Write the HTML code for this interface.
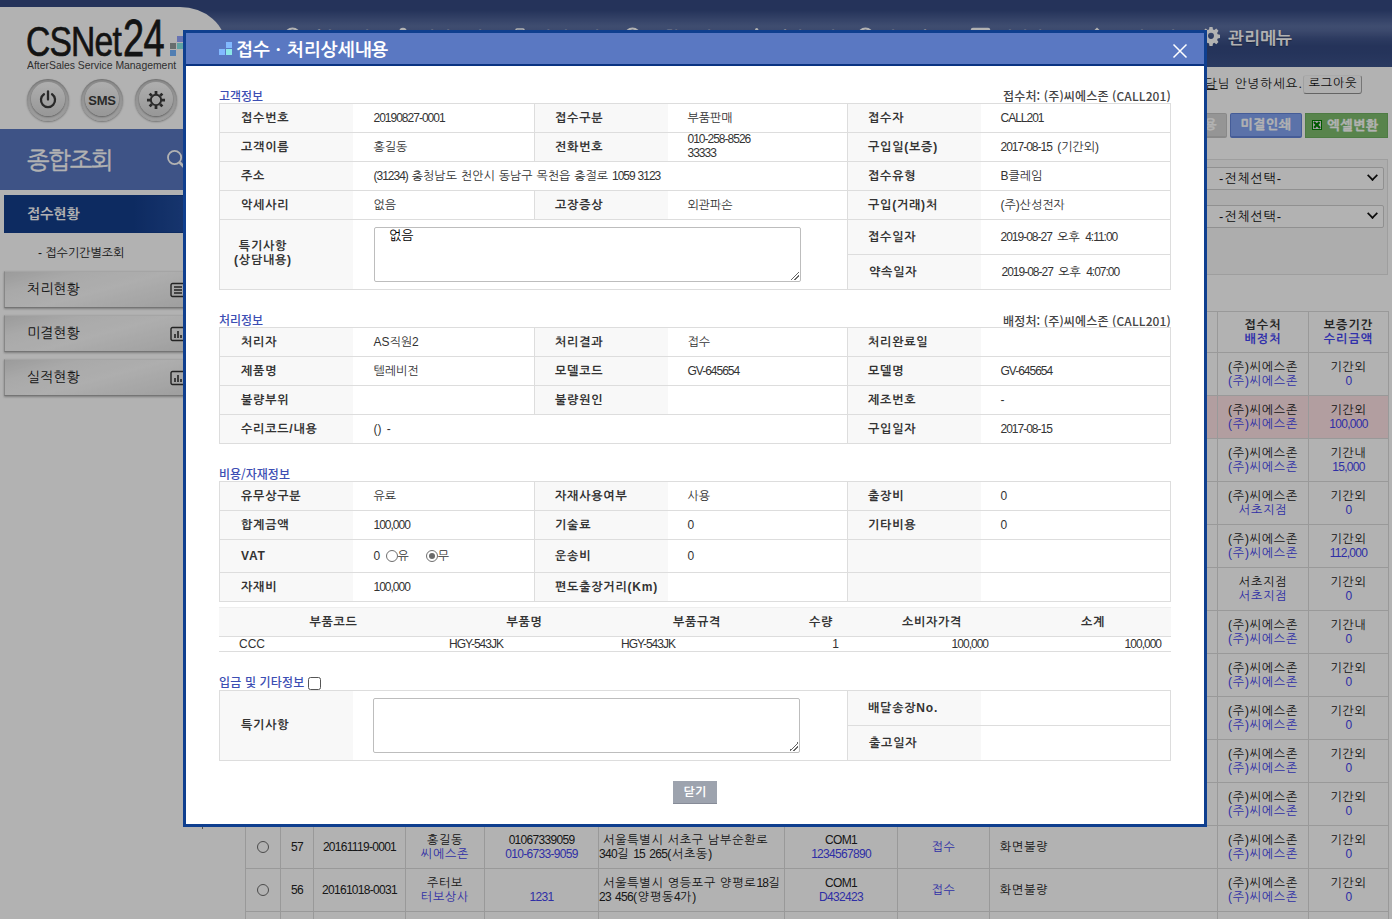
<!DOCTYPE html>
<html lang="ko">
<head>
<meta charset="utf-8">
<title>CSNet24 - 접수·처리상세내용</title>
<style>
*{box-sizing:border-box;}
html,body{margin:0;padding:0;}
body{width:1393px;height:919px;overflow:hidden;background:#fff;position:relative;
  font-family:"Liberation Sans","NanumGothic","Noto Sans CJK KR",sans-serif;font-size:12px;color:#222;}
.abs{position:absolute;}
/* ---------- underlying page ---------- */
#page{position:absolute;left:0;top:0;width:1392px;height:919px;overflow:hidden;background:#fff;}
#hdr{position:absolute;left:0;top:0;width:1392px;height:67px;
  background:linear-gradient(to bottom,#354a81 0%,#354a81 15%,#4a5e93 28%,#5b6fa1 39%,#56699c 46%,#40548a 58%,#354a81 69%,#364b83 80%,#3d538b 100%);}
#logo{position:absolute;left:0;top:7px;width:226px;height:122px;background:#fff;border-top-right-radius:46px 40px;}
#band{position:absolute;left:0;top:129px;width:240px;height:61px;background:#5977c1;}
#side{position:absolute;left:0;top:190px;width:240px;height:729px;background:#fff;}
.mbtn{position:absolute;left:4px;width:236px;height:37px;border:1px solid #c2c2c2;border-top-color:#ededed;border-bottom-color:#a8a8a8;
  background:linear-gradient(165deg,#dedede 0%,#f3f3f3 22%,#f9f9f9 45%,#ececec 70%,#dadada 100%);
  box-shadow:0 1px 2px rgba(0,0,0,.3);font-size:14px;color:#222;line-height:35px;padding-left:22px;}
.mbtn.on{background:linear-gradient(to right,#143e8c 0%,#143e8c 55%,#2f5bb0 100%);border-color:#143e8c;color:#fff;font-weight:bold;box-shadow:none;}
.rb{position:absolute;top:79px;width:42px;height:42px;border-radius:50%;background:linear-gradient(to bottom,#cfcfcf,#e4e4e4);box-shadow:0 1px 2px rgba(0,0,0,.35),inset 0 1px 2px rgba(0,0,0,.25);display:flex;align-items:center;justify-content:center;}
.rb::before{content:"";position:absolute;left:4px;top:3px;width:34px;height:34px;border-radius:50%;background:linear-gradient(to bottom,#fafafa,#d9d9d9);box-shadow:0 1px 2px rgba(0,0,0,.4);}
.rb>*{position:relative;}
.mi{position:absolute;left:165px;top:10px;}
#gnb .gi{position:absolute;top:27px;font-size:17px;line-height:24px;color:#fff;white-space:nowrap;letter-spacing:0;font-weight:bold;text-shadow:0 1px 1px rgba(0,0,0,.35);}
.btn{position:absolute;top:113px;height:25px;border:1px solid;border-bottom-width:2px;border-radius:2px;color:#fff;font-weight:bold;font-size:13px;line-height:21px;text-align:center;white-space:nowrap;letter-spacing:.6px;-webkit-text-stroke:.35px #fff;}
.sel{position:absolute;left:1100px;width:284px;height:23px;border:1px solid #cfcfcf;border-radius:2px;letter-spacing:.9px;background:#fff;font-size:13px;line-height:21px;padding-left:118px;color:#111;white-space:nowrap;}
.sel::after{content:"";position:absolute;right:6px;top:3px;width:7px;height:7px;border-right:2.4px solid #111;border-bottom:2.4px solid #111;transform:rotate(45deg) scale(.85);}
#lst{position:absolute;left:245px;top:311px;width:1143px;border-collapse:collapse;table-layout:fixed;font-size:12px;color:#222;}
#lst th,#lst td{border:1px solid #dcdcdc;padding:0;text-align:center;vertical-align:middle;line-height:14px;overflow:hidden;}
#lst tr{height:43px;}
#lst tr.hd{height:41px;}
#lst th{font-weight:bold;color:#333;background:#fff;line-height:14px;letter-spacing:1.1px;}
#lst th i{font-style:normal;color:#4646f5;}
#lst td{letter-spacing:.8px;}
#lst td .n{letter-spacing:-.7px;}
#lst td a{color:#4444ee;}
#lst td.l{text-align:left;}
#lst td.p{padding-left:10px;}
#lst tr.pk td{background:#ffe3e6;}
.rd{display:inline-block;width:12px;height:12px;border:1px solid #6c6c6c;border-radius:50%;background:#fff;vertical-align:middle;position:relative;top:-1px;}
/* overlay */
#ov{position:absolute;left:0;top:0;width:1392px;height:919px;background:rgba(0,0,0,.3);}
/* ---------- modal ---------- */
#modal{position:absolute;left:183px;top:30px;width:1024px;height:797px;border:3px solid #0f3f8f;background:#fff;}
#mh{position:absolute;left:0;top:0;width:1018px;height:33px;background:#5a78c2;border-bottom:2px solid #0a3382;}
#mh .ttl{position:absolute;left:50px;top:5px;font-size:18px;font-weight:bold;color:#fff;line-height:24px;white-space:nowrap;}
.sec{position:absolute;left:33px;font-size:12px;color:#3c4eb3;line-height:14px;white-space:nowrap;font-family:"Noto Sans CJK KR","Liberation Sans",sans-serif;font-weight:500;}
.secr{position:absolute;right:33px;font-size:12px;color:#444;line-height:14px;white-space:nowrap;font-family:"Noto Sans CJK KR","Liberation Sans",sans-serif;font-weight:500;letter-spacing:.14px;}
table.ft{position:absolute;left:33px;width:951px;border-collapse:collapse;table-layout:fixed;border:1px solid #ddd;}
table.ft th{background:#f8f8f8;text-align:left;font-weight:bold;color:#333;padding:0 0 0 20px;border-top:1px solid #ddd;border-bottom:1px solid #ddd;font-size:12px;letter-spacing:.8px;}
table.ft th:first-child{padding-left:21px;}
table.ft th:first-child + td{padding-left:21px;}
table.ft td{padding:0 0 0 20px;color:#333;border-top:1px solid #ddd;border-bottom:1px solid #ddd;font-size:12px;letter-spacing:0;word-spacing:2px;}
table.ft th.bl{border-left:1px solid #ddd;}
.icq{position:absolute;width:6px;height:6px;}
table.ft td .n, #pt .n{letter-spacing:-1px;}
.ta{width:427px;border:1px solid #bdbdbd;border-radius:2px;background:#fff;font-size:13px;line-height:15px;padding:0 0 0 9px;color:#000;position:relative;letter-spacing:0;}
.ta::after{content:"";position:absolute;right:1px;bottom:1px;width:9px;height:9px;background:linear-gradient(135deg,transparent 0 50%,#666 50% 58%,transparent 58% 70%,#666 70% 78%,transparent 78% 100%);}
.rdo{display:inline-block;width:12px;height:12px;border:1px solid #6e6e6e;border-radius:50%;vertical-align:-2.5px;margin-left:1px;background:#fff;position:relative;}
.rdo.on::after{content:"";position:absolute;left:2px;top:2px;width:6px;height:6px;border-radius:50%;background:#6a6a6a;}
#pt{position:absolute;left:33px;top:574px;width:952px;border-collapse:collapse;table-layout:fixed;font-size:12px;}
#pt th{background:#f8f8f8;height:29px;font-weight:bold;color:#333;text-align:center;border-top:1px solid #eee;border-bottom:1px solid #ddd;padding:0;letter-spacing:.75px;}
#pt td{height:15px;line-height:14px;text-align:center;color:#333;border-bottom:1px solid #ddd;padding:0;}
.cb{display:inline-block;width:13px;height:13px;border:1px solid #555;border-radius:2.5px;background:#fff;vertical-align:-3px;margin-left:4px;}
</style>
</head>
<body>
<div id="page">
  <div id="hdr"></div>
  <div id="logo"></div>
  <div id="band"></div>
  <div id="side"></div>
  <div id="logotxt" class="abs" style="left:26px;top:13px;width:160px;height:50px;white-space:nowrap;color:#1c1c1c;">
    <span class="abs" style="left:0;top:8px;font-size:42px;line-height:42px;transform:scaleX(.80);transform-origin:0 0;letter-spacing:-1px;-webkit-text-stroke:.7px #1c1c1c;">CSNet</span>
    <span class="abs" style="left:97px;top:-1px;font-size:52px;line-height:52px;transform:scaleX(.73);transform-origin:0 0;letter-spacing:-1px;-webkit-text-stroke:.8px #1c1c1c;">24</span>
  </div>
  <div class="abs" style="left:170px;top:43px;width:6px;height:6px;background:#949c9c;"></div>
  <div class="abs" style="left:177px;top:36px;width:7px;height:6px;background:#94a5ff;"></div>
  <div class="abs" style="left:177px;top:43px;width:7px;height:6px;background:#88e9e9;"></div>
  <div class="abs" style="left:170px;top:50px;width:6px;height:6px;background:#75b5ff;"></div>
  <div class="abs" id="sub" style="left:27px;top:59px;font-size:11px;line-height:13px;color:#444;white-space:nowrap;transform:scaleX(.945);transform-origin:0 0;">AfterSales Service Management</div>
  <div class="rb" style="left:27px;"><svg width="22" height="22" viewBox="0 0 20 20"><path d="M6.300 4.800A6.400 6.400 0 1 0 13.700 4.800" fill="none" stroke="#3c3c3c" stroke-width="2.100" stroke-linecap="round"/><path d="M10 2.200V9.600" stroke="#3c3c3c" stroke-width="2.100" stroke-linecap="round"/></svg></div>
  <div class="rb" style="left:81px;"><b style="font-size:13px;color:#3c3c3c;letter-spacing:-.2px;">SMS</b></div>
  <div class="rb" style="left:135px;"><svg width="22" height="22" viewBox="0 0 20 20"><circle cx="10" cy="10" r="4.700" fill="none" stroke="#3c3c3c" stroke-width="1.800"/><g stroke="#3c3c3c" stroke-width="2.500"><path d="M10 1.800V4.600M10 15.400V18.200M1.800 10H4.600M15.400 10H18.200M4.200 4.200L6.200 6.200M13.800 13.800L15.800 15.800M15.800 4.200L13.800 6.200M6.200 13.800L4.200 15.800"/></g></svg></div>
  <div class="abs" style="left:27px;top:146px;font-size:24px;line-height:30px;color:#fff;white-space:nowrap;letter-spacing:-1.2px;-webkit-text-stroke:.35px #fff;">종합조회</div>
  <svg class="abs" style="left:166px;top:149px;" width="22" height="22" viewBox="0 0 22 22"><circle cx="8.600" cy="8.500" r="6.600" fill="none" stroke="#fff" stroke-width="1.800"/><path d="M13.600 13.400L19.500 19.500" stroke="#fff" stroke-width="2.800"/></svg>
  <div class="mbtn on" style="top:195px;height:38px;line-height:37px;">접수현황</div>
  <div class="abs" style="left:38px;top:246px;font-size:12px;line-height:14px;color:#222;white-space:nowrap;">- 접수기간별조회</div>
  <div class="mbtn" style="top:271px;">처리현황<svg class="mi" width="16" height="16" viewBox="0 0 16 16"><rect x="1" y="1.5" width="14" height="13" rx="1.5" fill="none" stroke="#333" stroke-width="1.4"/><path d="M4 5H12M4 8H12M4 11H12" stroke="#333" stroke-width="1.3"/></svg></div>
  <div class="mbtn" style="top:315px;">미결현황<svg class="mi" width="16" height="16" viewBox="0 0 16 16"><rect x="1" y="1.5" width="14" height="13" rx="1.5" fill="none" stroke="#333" stroke-width="1.4"/><path d="M5 12V8M8 12V5M11 12V9" stroke="#333" stroke-width="1.6"/></svg></div>
  <div class="mbtn" style="top:359px;">실적현황<svg class="mi" width="16" height="16" viewBox="0 0 16 16"><rect x="1" y="1.5" width="14" height="13" rx="1.5" fill="none" stroke="#333" stroke-width="1.4"/><path d="M5 12V8M8 12V5M11 12V9" stroke="#333" stroke-width="1.6"/></svg></div>
  <!-- top menu (mostly hidden behind the dialog) -->
  <div id="gnb">
    <svg class="abs" style="left:284px;top:27px;" width="17" height="18" viewBox="0 0 17 18"><circle cx="8.5" cy="8.5" r="7" fill="none" stroke="#fff" stroke-width="2"/><path d="M8.500 4.500V9H12" fill="none" stroke="#fff" stroke-width="1.600"/></svg><span class="gi" style="left:306px;">접수관리</span>
    <svg class="abs" style="left:395px;top:27px;" width="16" height="18" viewBox="0 0 16 18"><circle cx="8" cy="4.500" r="3.800" fill="#fff"/><path d="M1 17c0-5 3-7 7-7s7 2 7 7z" fill="#fff"/></svg><span class="gi" style="left:419px;">처리관리</span>
    <svg class="abs" style="left:515px;top:28px;" width="14" height="17" viewBox="0 0 14 17"><rect x="1" y="1" width="8" height="3" rx="1" fill="none" stroke="#fff" stroke-width="1.600"/><rect x="1" y="4" width="12" height="12" rx="1" fill="#fff"/></svg><span class="gi" style="left:536px;">자재관리</span>
    <svg class="abs" style="left:624px;top:27px;" width="17" height="18" viewBox="0 0 17 18"><circle cx="8.5" cy="8.5" r="7" fill="none" stroke="#fff" stroke-width="2"/><path d="M8.500 4.500V9H12" fill="none" stroke="#fff" stroke-width="1.600"/></svg><span class="gi" style="left:648px;">종합조회</span>
    <svg class="abs" style="left:750px;top:27px;" width="16" height="18" viewBox="0 0 16 18"><circle cx="6.700" cy="2.500" r="1.600" fill="#fff"/><path d="M1 17V9h3v8zM5.500 17V6h3v11zM10 17v-6h3v6z" fill="#fff"/></svg><span class="gi" style="left:772px;">정산관리</span>
    <svg class="abs" style="left:857px;top:27px;" width="17" height="18" viewBox="0 0 17 18"><circle cx="8.5" cy="8.5" r="7" fill="none" stroke="#fff" stroke-width="2"/><path d="M8.500 4.500V9H12" fill="none" stroke="#fff" stroke-width="1.600"/></svg><span class="gi" style="left:880px;">기준정보</span>
    <svg class="abs" style="left:970px;top:27px;" width="21" height="17" viewBox="0 0 21 17"><rect x=".8" y=".8" width="19.400" height="13" rx="2" fill="#fff"/><path d="M5 14l-1 3h4l1-3z" fill="#fff"/></svg><span class="gi" style="left:996px;">게시판</span>
    <svg class="abs" style="left:1089px;top:27px;" width="16" height="18" viewBox="0 0 16 18"><path d="M8 .5l3 3c2 1.500 2 5 2.500 8l1.500 2.500H1L2.500 11.500c.5-3 .5-6.500 2.500-8z" fill="#fff"/><circle cx="8" cy="16" r="1.800" fill="#fff"/></svg><span class="gi" style="left:1112px;">고객관리</span>
    <svg class="abs" style="left:1201px;top:26px;" width="20" height="21" viewBox="0 0 20 20" preserveAspectRatio="none"><path fill="#fff" fill-rule="evenodd" d="M8.3 0.6h3.4l.5 2.6 1.5.6 2.2-1.5 2.4 2.4-1.5 2.2.6 1.5 2.6.5v3.4l-2.6.5-.6 1.5 1.5 2.2-2.4 2.4-2.2-1.5-1.5.6-.5 2.6H8.3l-.5-2.6-1.5-.6-2.2 1.5-2.4-2.4 1.5-2.2-.6-1.5L0 12.3V8.9l2.6-.5.6-1.5L1.7 4.700l2.4-2.4 2.2 1.500 1.500-.6zM10 6.700a3.300 3.300 0 1 0 0 6.600 3.300 3.300 0 0 0 0-6.600z" transform="translate(1 .4) scale(.9)"/></svg>
    <span class="gi" style="left:1228px;">관리메뉴</span>
  </div>
  <!-- user line -->
  <div class="abs" style="left:1080px;top:77px;width:223px;text-align:right;font-size:12.5px;line-height:15px;color:#222;white-space:nowrap;letter-spacing:1px;"><u>씨에스존 상담</u>님 안녕하세요.</div>
  <div class="abs" style="left:1303px;top:75px;width:59px;height:19px;border:1px solid;border-color:#f4f4f4 #a9a9a9 #909090 #e6e6e6;border-radius:3px;background:#fdfdfd;font-size:12px;line-height:15px;text-align:center;color:#111;letter-spacing:.9px;padding-left:1px;">로그아웃</div>
  <!-- action buttons -->
  <div class="btn" style="left:1156px;width:71px;background:#d6d6d6;border-color:#c4c4c4;color:#fff;">일괄적용</div>
  <div class="btn" style="left:1230px;width:72px;background:#83a4f2;border-color:#6485d8;">미결인쇄</div>
  <div class="btn" style="left:1305px;width:83px;background:#7ebe6e;border-color:#70b062;border-radius:0;border-width:1px;padding-left:13px;line-height:23px;-webkit-text-stroke:.35px #fff;"><svg class="abs" style="left:6px;top:6px;" width="10" height="10" viewBox="0 0 10 10"><rect x=".5" y=".5" width="9" height="9" fill="#f3e6f3" stroke="#008200"/><path d="M2 2L8 8M7.500 2L5.500 4.200M2.200 7.800L4.200 5.600" stroke="#008200" stroke-width="2.200"/></svg>엑셀변환</div>
  <!-- filter panel -->
  <div class="abs" style="left:246px;top:159px;width:1142px;height:116px;border:1px solid #e2e2e2;background:#f8f8f8;"></div>
  <div class="sel" style="top:167px;">-전체선택-</div>
  <div class="sel" style="top:205px;">-전체선택-</div>
  <table id="lst">
    <colgroup><col style="width:35px"><col style="width:33px"><col style="width:92px"><col style="width:79px"><col style="width:114px"><col style="width:186px"><col style="width:113px"><col style="width:92px"><col style="width:228px"><col style="width:91px"><col style="width:80px"></colgroup>
    <tr class="hd"><th>선택</th><th>No</th><th>접수번호</th><th>고객명<br><i>거래처</i></th><th>전화번호<br><i>휴대폰</i></th><th>주소</th><th>모델명<br><i>제조번호</i></th><th>처리결과</th><th>고장증상</th><th>접수처<br><i>배정처</i></th><th>보증기간<br><i>수리금액</i></th></tr>
    <tr><td><span class="rd"></span></td><td><span class="n">69</span></td><td><span class="n">20190827-0001</span></td><td>홍길동<br><a>&nbsp;</a></td><td><span class="n">010-258-8526</span><br><a><span class="n">33333</span></a></td><td class="l">&nbsp;충청남도 천안시 동남구 목천읍 충절로 <span class="n">1059</span> <span class="n">3123</span></td><td><span class="n">GV-645654</span><br><a>-</a></td><td><a>접수</a></td><td class="l p">외관파손</td><td>(주)씨에스존<br><a>(주)씨에스존</a></td><td>기간외<br><a><span class="n">0</span></a></td></tr>
    <tr class="pk"><td><span class="rd"></span></td><td><span class="n">68</span></td><td><span class="n">20190826-0002</span></td><td>홍길동<br><a>&nbsp;</a></td><td><span class="n">010-258-8526</span><br><a><span class="n">33333</span></a></td><td class="l">&nbsp;충청남도 천안시 동남구 목천읍 충절로 <span class="n">1059</span> <span class="n">3123</span></td><td><span class="n">GV-645654</span><br><a>-</a></td><td><a>접수</a></td><td class="l p">외관파손</td><td>(주)씨에스존<br><a>(주)씨에스존</a></td><td>기간외<br><a><span class="n">100,000</span></a></td></tr>
    <tr><td><span class="rd"></span></td><td><span class="n">67</span></td><td><span class="n">20190826-0001</span></td><td>김영수<br><a>&nbsp;</a></td><td><span class="n">010-555-1234</span><br><a>&nbsp;</a></td><td class="l">&nbsp;서울특별시 강남구 테헤란로 <span class="n">152</span> <span class="n">1203</span></td><td><span class="n">GV-645654</span><br><a><span class="n">A12345</span></a></td><td><a>완료</a></td><td class="l p">전원불량</td><td>(주)씨에스존<br><a>(주)씨에스존</a></td><td>기간내<br><a><span class="n">15,000</span></a></td></tr>
    <tr><td><span class="rd"></span></td><td><span class="n">66</span></td><td><span class="n">20190701-0003</span></td><td>이민호<br><a>&nbsp;</a></td><td><span class="n">010-222-3333</span><br><a>&nbsp;</a></td><td class="l">&nbsp;서울특별시 서초구 서초대로 <span class="n">77</span> <span class="n">301</span></td><td><span class="n">COM1</span><br><a><span class="n">S998877</span></a></td><td><a>접수</a></td><td class="l p">소음발생</td><td>(주)씨에스존<br><a>서초지점</a></td><td>기간외<br><a><span class="n">0</span></a></td></tr>
    <tr><td><span class="rd"></span></td><td><span class="n">65</span></td><td><span class="n">20190701-0002</span></td><td>박지성<br><a>&nbsp;</a></td><td><span class="n">010-777-8888</span><br><a>&nbsp;</a></td><td class="l">&nbsp;경기도 성남시 분당구 판교로 <span class="n">235</span> <span class="n">5</span>층</td><td><span class="n">COM1</span><br><a><span class="n">P112233</span></a></td><td><a>완료</a></td><td class="l p">화면불량</td><td>(주)씨에스존<br><a>(주)씨에스존</a></td><td>기간외<br><a><span class="n">112,000</span></a></td></tr>
    <tr><td><span class="rd"></span></td><td><span class="n">64</span></td><td><span class="n">20190701-0001</span></td><td>최수진<br><a>&nbsp;</a></td><td><span class="n">010-444-5555</span><br><a>&nbsp;</a></td><td class="l">&nbsp;서울특별시 서초구 반포대로 <span class="n">58</span> <span class="n">1102</span></td><td><span class="n">COM1</span><br><a><span class="n">K445566</span></a></td><td><a>접수</a></td><td class="l p">전원불량</td><td>서초지점<br><a>서초지점</a></td><td>기간외<br><a><span class="n">0</span></a></td></tr>
    <tr><td><span class="rd"></span></td><td><span class="n">63</span></td><td><span class="n">20190520-0001</span></td><td>정우성<br><a>&nbsp;</a></td><td><span class="n">010-999-0000</span><br><a>&nbsp;</a></td><td class="l">&nbsp;인천광역시 연수구 송도과학로 <span class="n">32</span> <span class="n">707</span></td><td><span class="n">GV-645654</span><br><a>-</a></td><td><a>접수</a></td><td class="l p">외관파손</td><td>(주)씨에스존<br><a>(주)씨에스존</a></td><td>기간내<br><a><span class="n">0</span></a></td></tr>
    <tr><td><span class="rd"></span></td><td><span class="n">62</span></td><td><span class="n">20181203-0002</span></td><td>한지민<br><a>&nbsp;</a></td><td><span class="n">010-123-4567</span><br><a>&nbsp;</a></td><td class="l">&nbsp;서울특별시 마포구 월드컵북로 <span class="n">396</span> <span class="n">12</span>층</td><td><span class="n">COM1</span><br><a><span class="n">M778899</span></a></td><td><a>접수</a></td><td class="l p">화면불량</td><td>(주)씨에스존<br><a>(주)씨에스존</a></td><td>기간외<br><a><span class="n">0</span></a></td></tr>
    <tr><td><span class="rd"></span></td><td><span class="n">61</span></td><td><span class="n">20181203-0001</span></td><td>강동원<br><a>&nbsp;</a></td><td><span class="n">010-321-7654</span><br><a>&nbsp;</a></td><td class="l">&nbsp;부산광역시 해운대구 센텀중앙로 <span class="n">79</span> <span class="n">2101</span></td><td><span class="n">COM1</span><br><a><span class="n">B334455</span></a></td><td><a>접수</a></td><td class="l p">화면불량</td><td>(주)씨에스존<br><a>(주)씨에스존</a></td><td>기간외<br><a><span class="n">0</span></a></td></tr>
    <tr><td><span class="rd"></span></td><td><span class="n">59</span></td><td><span class="n">20170315-0002</span></td><td>송혜교<br><a>&nbsp;</a></td><td><span class="n">010-888-1111</span><br><a>&nbsp;</a></td><td class="l">&nbsp;대구광역시 수성구 동대구로 <span class="n">330</span> <span class="n">4</span>층</td><td><span class="n">COM1</span><br><a><span class="n">D667788</span></a></td><td><a>접수</a></td><td class="l p">화면불량</td><td>(주)씨에스존<br><a>(주)씨에스존</a></td><td>기간외<br><a><span class="n">0</span></a></td></tr>
    <tr><td><span class="rd"></span></td><td><span class="n">58</span></td><td><span class="n">20170315-0001</span></td><td>홍길동<br><a>씨에스존</a></td><td><span class="n">01067339059</span><br><a><span class="n">010-6733-9059</span></a></td><td class="l">&nbsp;서울특별시 서초구 남부순환로 <span class="n">340</span>길 <span class="n">15</span> <span class="n">265</span>(서초동)</td><td><span class="n">COM1</span><br><a><span class="n">1234567890</span></a></td><td><a>접수</a></td><td class="l p">화면불량</td><td>(주)씨에스존<br><a>(주)씨에스존</a></td><td>기간외<br><a><span class="n">0</span></a></td></tr>
    <tr><td><span class="rd"></span></td><td><span class="n">57</span></td><td><span class="n">20161119-0001</span></td><td>홍길동<br><a>씨에스존</a></td><td><span class="n">01067339059</span><br><a><span class="n">010-6733-9059</span></a></td><td class="l">&nbsp;서울특별시 서초구 남부순환로 <span class="n">340</span>길 <span class="n">15</span> <span class="n">265</span>(서초동)</td><td><span class="n">COM1</span><br><a><span class="n">1234567890</span></a></td><td><a>접수</a></td><td class="l p">화면불량</td><td>(주)씨에스존<br><a>(주)씨에스존</a></td><td>기간외<br><a><span class="n">0</span></a></td></tr>
    <tr><td><span class="rd"></span></td><td><span class="n">56</span></td><td><span class="n">20161018-0031</span></td><td>주터보<br><a>터보상사</a></td><td>&nbsp;<br><a><span class="n">1231</span></a></td><td class="l">&nbsp;서울특별시 영등포구 양평로<span class="n">18</span>길 <span class="n">23</span> <span class="n">456</span>(양평동<span class="n">4</span>가)</td><td><span class="n">COM1</span><br><a><span class="n">D432423</span></a></td><td><a>접수</a></td><td class="l p">화면불량</td><td>(주)씨에스존<br><a>(주)씨에스존</a></td><td>기간외<br><a><span class="n">0</span></a></td></tr>
    <tr><td><span class="rd"></span></td><td><span class="n">55</span></td><td><span class="n">20161018-0030</span></td><td>주터보<br><a>터보상사</a></td><td>&nbsp;<br><a><span class="n">1231</span></a></td><td class="l">&nbsp;서울특별시 영등포구 양평로<span class="n">18</span>길 <span class="n">23</span> <span class="n">456</span>(양평동<span class="n">4</span>가)</td><td><span class="n">COM1</span><br><a><span class="n">D432423</span></a></td><td><a>접수</a></td><td class="l p">화면불량</td><td>(주)씨에스존<br><a>(주)씨에스존</a></td><td>기간외<br><a><span class="n">0</span></a></td></tr>
  </table>
  <div class="abs" style="left:202px;top:827px;width:1px;height:2px;background:#777;"></div>
  <!--PAGE-->
</div>
<div id="ov"></div>
<div id="modal">
  <div id="mh"><div class="ttl">접수ㆍ처리상세내용</div></div>
  <div class="icq" style="left:33px;top:16px;background:#82b9ff;"></div>
  <div class="icq" style="left:40px;top:9px;background:#82b9ff;"></div>
  <div class="icq" style="left:40px;top:16px;background:#8ce8e8;"></div>
  <svg class="abs" style="left:986px;top:10px;" width="16" height="16" viewBox="0 0 16 16"><path d="M1.5 1.5L14.500 14.500M14.500 1.500L1.500 14.500" stroke="#fff" stroke-width="1.500"/></svg>

  <div class="sec" style="top:56px;">고객정보</div>
  <div class="secr" style="top:56px;">접수처: (주)씨에스존 (CALL201)</div>
  <table class="ft" style="top:70px;">
    <colgroup><col style="width:133px"><col style="width:182px"><col style="width:133px"><col style="width:180px"><col style="width:133px"><col style="width:190px"></colgroup>
    <tr style="height:29px"><th>접수번호</th><td><span class="n">20190827-0001</span></td><th class="bl">접수구분</th><td>부품판매</td><th class="bl">접수자</th><td><span class="n">CALL201</span></td></tr>
    <tr style="height:29px"><th>고객이름</th><td>홍길동</td><th class="bl">전화번호</th><td style="line-height:14px;"><span class="n" style="position:relative;top:-1px;">010-258-8526<br>33333</span></td><th class="bl">구입일(보증)</th><td><span class="n">2017-08-15</span> (기간외)</td></tr>
    <tr style="height:29px"><th>주소</th><td colspan="3"><span id="addr" style="word-spacing:.6px;"><span class="n">(31234)</span> 충청남도 천안시 동남구 목천읍 충절로 <span class="n">1059 3123</span></span></td><th class="bl">접수유형</th><td>B클레임</td></tr>
    <tr style="height:29px"><th>악세사리</th><td>없음</td><th class="bl">고장증상</th><td>외관파손</td><th class="bl">구입(거래)처</th><td>(주)산성전자</td></tr>
    <tr style="height:35px"><th rowspan="2" style="line-height:14px;"><span style="display:inline-block;text-align:center;margin-left:-7px;position:relative;top:-2px;">특기사항<br>(상담내용)</span></th><td rowspan="2" colspan="3" style="vertical-align:top;"><div class="ta" style="margin-top:7px;height:55px;line-height:15px;">&nbsp;없음</div></td><th class="bl">접수일자</th><td><span class="n">2019-08-27</span> 오후 <span class="n">4:11:00</span></td></tr>
    <tr style="height:35px"><th class="bl">약속일자</th><td><span class="n">2019-08-27</span> 오후 <span class="n">4:07:00</span></td></tr>
  </table>

  <div class="sec" style="top:280px;">처리정보</div>
  <div class="secr" style="top:281px;">배정처: (주)씨에스존 (CALL201)</div>
  <table class="ft" style="top:294px;">
    <colgroup><col style="width:133px"><col style="width:182px"><col style="width:133px"><col style="width:180px"><col style="width:133px"><col style="width:190px"></colgroup>
    <tr style="height:29px"><th>처리자</th><td>AS직원2</td><th class="bl">처리결과</th><td>접수</td><th class="bl">처리완료일</th><td></td></tr>
    <tr style="height:29px"><th>제품명</th><td>텔레비전</td><th class="bl">모델코드</th><td><span class="n">GV-645654</span></td><th class="bl">모델명</th><td><span class="n">GV-645654</span></td></tr>
    <tr style="height:29px"><th>불량부위</th><td></td><th class="bl">불량원인</th><td></td><th class="bl">제조번호</th><td>-</td></tr>
    <tr style="height:29px"><th>수리코드/내용</th><td colspan="3">() -</td><th class="bl">구입일자</th><td><span class="n">2017-08-15</span></td></tr>
  </table>

  <div class="sec" style="top:434px;">비용/자재정보</div>
  <table class="ft" style="top:448px;">
    <colgroup><col style="width:133px"><col style="width:182px"><col style="width:133px"><col style="width:180px"><col style="width:133px"><col style="width:190px"></colgroup>
    <tr style="height:29px"><th>유무상구분</th><td>유료</td><th class="bl">자재사용여부</th><td>사용</td><th class="bl">출장비</th><td><span class="n">0</span></td></tr>
    <tr style="height:29px"><th>합계금액</th><td><span class="n">100,000</span></td><th class="bl">기술료</th><td><span class="n">0</span></td><th class="bl">기타비용</th><td><span class="n">0</span></td></tr>
    <tr style="height:33px"><th>VAT</th><td><span class="n">0</span> <span class="rdo"></span>유 &nbsp;&nbsp;<span class="rdo on" style="margin-left:1px;"></span>무</td><th class="bl">운송비</th><td><span class="n">0</span></td><th class="bl"></th><td></td></tr>
    <tr style="height:29px"><th>자재비</th><td><span class="n">100,000</span></td><th class="bl">편도출장거리(Km)</th><td></td><th class="bl"></th><td></td></tr>
  </table>

  <table id="pt">
    <colgroup><col style="width:229px"><col style="width:153px"><col style="width:192px"><col style="width:56px"><col style="width:166px"><col style="width:156px"></colgroup>
    <tr class="h"><th>부품코드</th><th>부품명</th><th>부품규격</th><th>수량</th><th>소비자가격</th><th>소계</th></tr>
    <tr class="d"><td style="text-align:left;padding-left:20px;">CCC</td><td style="text-align:left;padding-left:1px;"><span class="n">HGY-543JK</span></td><td style="text-align:left;padding-left:20px;"><span class="n">HGY-543JK</span></td><td style="text-align:right;padding-right:11px;"><span class="n">1</span></td><td style="text-align:right;padding-right:27px;"><span class="n">100,000</span></td><td style="text-align:right;padding-right:10px;"><span class="n">100,000</span></td></tr>
  </table>

  <div class="sec" style="top:642px;letter-spacing:.15px;">입금 및 기타정보<span class="cb"></span></div>
  <table class="ft" style="top:657px;">
    <colgroup><col style="width:133px"><col style="width:182px"><col style="width:133px"><col style="width:180px"><col style="width:133px"><col style="width:190px"></colgroup>
    <tr style="height:35px"><th rowspan="2"><span style="position:relative;top:-1px;">특기사항</span></th><td rowspan="2" colspan="3" style="vertical-align:top;padding-left:20px;"><div class="ta" style="margin-top:7px;height:55px;"></div></td><th class="bl">배달송장No.</th><td></td></tr>
    <tr style="height:35px"><th class="bl">출고일자</th><td></td></tr>
  </table>
  <div class="abs" style="left:487px;top:748px;width:44px;height:23px;background:#9da3ae;border-bottom:1px solid #868b97;color:#fff;font-weight:bold;font-size:12px;line-height:23px;text-align:center;letter-spacing:.3px;">닫기</div>
  <!--MODAL-->
</div>
</body>
</html>
